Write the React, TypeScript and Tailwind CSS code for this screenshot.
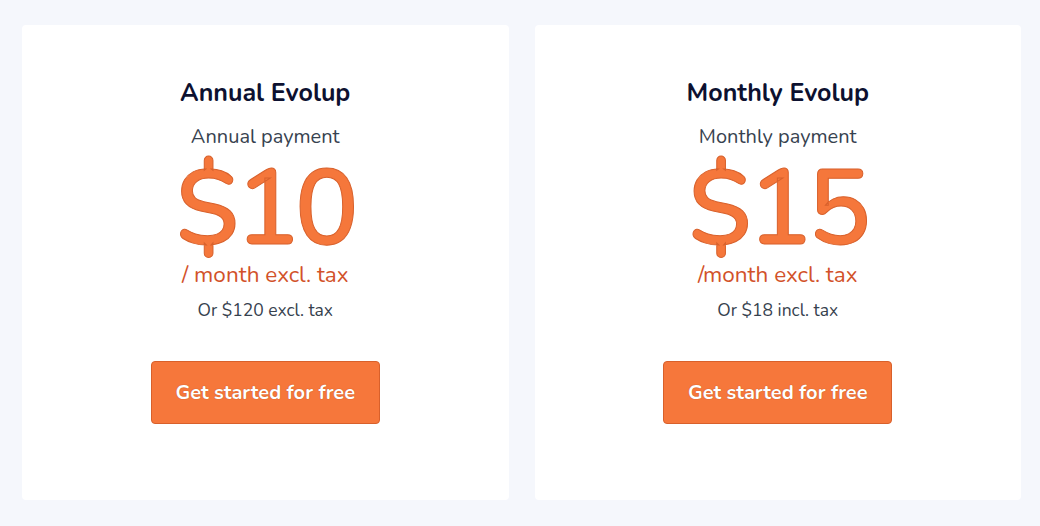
import React from 'react';

type Plan = {
  title: string;
  subtitle: string;
  price: string;
  per: string;
  note: string;
};

const plans: Plan[] = [
  { title: 'Annual Evolup', subtitle: 'Annual payment', price: '$10', per: '/ month excl. tax', note: 'Or $120 excl. tax' },
  { title: 'Monthly Evolup', subtitle: 'Monthly payment', price: '$15', per: '/month excl. tax', note: 'Or $18 incl. tax' },
];

function PlanCard({ plan }: { plan: Plan }) {
  return (
    <div className="flex-1 bg-white rounded-[4px] flex flex-col items-center pt-[50px]">
      <h2 className="text-[25px] font-bold text-[#0d1130] leading-[36px]">{plan.title}</h2>
      <p className="mt-[12px] text-[20px] text-[#37424f] leading-[28px]">{plan.subtitle}</p>
      <div
        className="mt-[11px] text-[106px] font-semibold text-[#f5773b] leading-[94px] tracking-[-4px]"
        style={{ WebkitTextStroke: '1px #d8612c' }}
      >
        {plan.price}
      </div>
      <p className="mt-[4px] text-[22.5px] text-[#d2522a] leading-[30px]">{plan.per}</p>
      <p className="mt-[7px] text-[17.5px] text-[#36414e] leading-[26px]">{plan.note}</p>
      <button className="mt-[38px] w-[229px] h-[63px] bg-[#f6773b] border border-[#d8602b] rounded-[4px] text-white text-[20px] font-bold [text-shadow:0_0_1px_rgba(120,40,0,0.6)]">
        Get started for free
      </button>
    </div>
  );
}

export default function App() {
  return (
    <div
      className="w-[1040px] h-[526px] bg-[#f5f7fc] flex gap-[26px] pl-[22px] pr-[19px] pt-[25px] pb-[26px]"
      style={{ fontFamily: '"Nunito", Lato, "Open Sans", sans-serif' }}
    >
      {plans.map((p) => (
        <PlanCard key={p.title} plan={p} />
      ))}
    </div>
  );
}
